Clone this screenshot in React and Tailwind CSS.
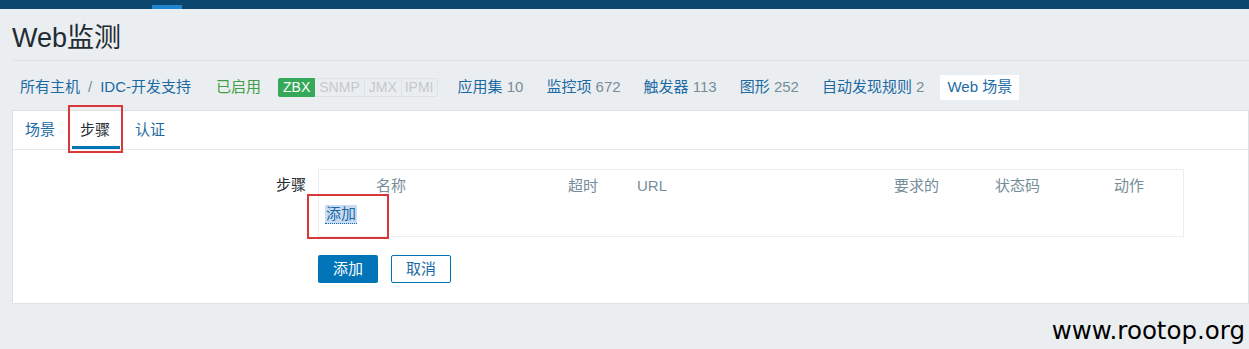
import React from "react";

const FONT = { fontFamily: '"Liberation Sans", Arial, "Noto Sans CJK SC", sans-serif' };

function HostLink({ label, count }) {
  return (
    <span className="whitespace-nowrap">
      <span className="text-[#1b6aa3]">{label}</span>
      {count !== undefined && <span className="text-[#768d99]"> {count}</span>}
    </span>
  );
}

export default function App() {
  const cols = ["", "名称", "超时", "URL", "要求的", "状态码", "动作"];

  return (
    <div className="w-[1249px] h-[349px] bg-[#ebeef1] overflow-hidden relative" style={FONT}>
      {/* top nav strip */}
      <div className="h-[9px] bg-[#0b466e]">
        <div className="ml-[152px] w-[30px] h-[4px] translate-y-[5px] bg-[#2186d0]"></div>
      </div>

      <div className="pl-3">
        {/* page title */}
        <div className="h-[52px] flex items-center border-b border-[#dde2e6]">
          <h1 className="text-[27px] leading-none text-[#1f2c33] mt-[7px]">Web监测</h1>
        </div>

        {/* host breadcrumb / navigation */}
        <div className="h-[49px] flex items-center text-[15px] pl-2 pt-[3px]">
          <span className="text-[#1b6aa3]">所有主机</span>
          <span className="text-[#768d99] mx-[8px]">/</span>
          <span className="text-[#1b6aa3]">IDC-开发支持</span>
          <span className="text-[#429e47] ml-[25px]">已启用</span>
          <div className="flex ml-[17px] text-[14px] leading-[17px]">
            <span className="bg-[#36a85a] text-white px-[4px] border border-[#36a85a] rounded-l-[2px]">ZBX</span>
            <span className="text-[#c3c9cc] px-[4px] border border-[#dde2e6] border-l-0">SNMP</span>
            <span className="text-[#c3c9cc] px-[4px] border border-[#dde2e6] border-l-0">JMX</span>
            <span className="text-[#c3c9cc] px-[3px] border border-[#dde2e6] border-l-0 rounded-r-[2px]">IPMI</span>
          </div>
          <div className="flex items-center gap-[23px] ml-[20px]">
            <HostLink label="应用集" count="10" />
            <HostLink label="监控项" count="672" />
            <HostLink label="触发器" count="113" />
            <HostLink label="图形" count="252" />
            <HostLink label="自动发现规则" count="2" />
          </div>
          <span className="ml-[16px] bg-white text-[#1b6aa3] px-[7px] h-[25px] flex items-center">Web 场景</span>
        </div>

        {/* white panel */}
        <div className="bg-white border border-[#dde2e6] h-[194px]">
          {/* tabs */}
          <div className="h-[39px] flex text-[15px] border-b border-[#e6eaed] pl-[12px]">
            <div className="flex items-center text-[#1b6aa3]">场景</div>
            <div className="ml-[17px] relative flex items-center px-[8px] pr-[10px] text-[#1f2c33] border-b-[3px] border-[#0275b8] pt-[3px]">
              步骤
              <div className="absolute left-[-4px] right-[-3px] top-[-6px] bottom-[-7px] border-2 border-[#d9373a]"></div>
            </div>
            <div className="ml-[15px] flex items-center text-[#1b6aa3]">认证</div>
          </div>

          {/* form */}
          <div className="flex pt-[19px] text-[15px]">
            <div className="w-[293px] text-right text-[#1f2c33] pt-[5px]">步骤</div>
            <div className="ml-[12px]">
              <div className="w-[866px] h-[68px] border border-[#ebeef1]">
                <div className="grid grid-cols-[57px_192px_69px_257px_101px_119px_1fr] h-[33px] items-center text-[#768d99]">
                  {cols.map((c, i) => (
                    <span key={i}>{c}</span>
                  ))}
                </div>
                <div className="relative pl-[6px] h-[22px] flex items-center">
                  <span className="bg-[#c9dcf3] text-[#1b6aa3] border-b border-dotted border-[#1b6aa3] leading-[18px] px-[1px]">添加</span>
                  <div className="absolute left-[-12px] top-[-9px] w-[82px] h-[45px] border-2 border-[#d9373a]"></div>
                </div>
              </div>
              <div className="flex gap-[13px] mt-[18px]">
                <button className="w-[60px] h-[28px] bg-[#0275b8] text-white rounded-[2px] text-[15px]">添加</button>
                <button className="w-[60px] h-[28px] bg-white text-[#1b6aa3] border border-[#0275b8] rounded-[2px] text-[15px]">取消</button>
              </div>
            </div>
          </div>
        </div>
      </div>

      {/* watermark */}
      <div
        className="absolute right-[4px] bottom-[6px] text-[24.5px] text-black leading-none"
        style={{ fontFamily: '"DejaVu Sans", Verdana, sans-serif' }}
      >
        www.rootop.org
      </div>
    </div>
  );
}
